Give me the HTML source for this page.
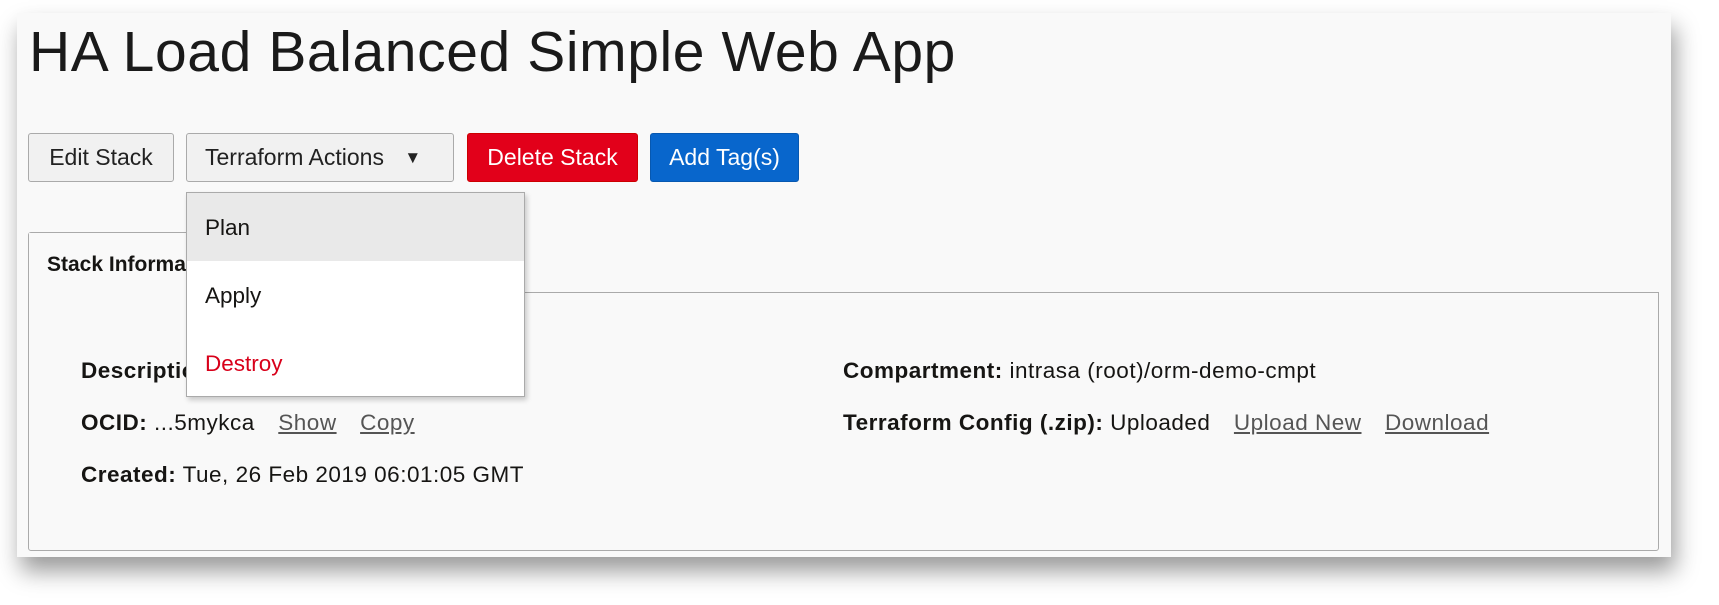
<!DOCTYPE html>
<html><head><style>
body{margin:0;width:1719px;height:605px;background:#fff;font-family:"Liberation Sans",sans-serif;position:relative;overflow:hidden;color:#161513}
.panel{position:absolute;left:17px;top:13px;width:1654px;height:544px;background:#f9f9f9;box-shadow:4px 14px 22px rgba(0,0,0,0.4)}
.a{position:absolute;white-space:nowrap}
h1{position:absolute;left:29px;top:19px;margin:0;font-weight:normal;font-size:57px;letter-spacing:0.6px;color:#1a1a1a;white-space:nowrap}
.btn{position:absolute;top:133px;height:49px;box-sizing:border-box;border-radius:3px;font-size:23px;line-height:47px;text-align:center;white-space:nowrap}
.g{background:#f1f1f1;border:1px solid #aaa;color:#222}
.box{position:absolute;border:1px solid #aaa;background:#f9f9f9}
.lbl{font-weight:bold}
.lnk{color:#555;text-decoration:underline;margin-left:10px}
.r{position:absolute;font-size:22.5px;letter-spacing:0.5px;white-space:nowrap}
</style></head><body>
<div class="panel"></div>
<h1>HA Load Balanced Simple Web App</h1>
<div class="btn g" style="left:28px;width:146px">Edit Stack</div>
<div class="btn g" style="left:186px;width:268px;text-align:left;padding-left:18px">Terraform Actions <span style="font-size:17px;margin-left:14px;position:relative;top:-2px">&#9660;</span></div>
<div class="btn" style="left:467px;width:171px;background:#e2001a;color:#fff;border:1px solid #c00">Delete Stack</div>
<div class="btn" style="left:650px;width:149px;background:#0866cc;color:#fff;border:1px solid #0758b0">Add Tag(s)</div>

<div class="box" style="left:28px;top:232px;width:320px;height:70px;border-bottom:none;border-radius:3px 3px 0 0"></div>
<div class="box" style="left:28px;top:292px;width:1629px;height:257px;border-top:1px solid #aaa;border-radius:0 0 3px 3px"></div>
<div class="box" style="left:29px;top:233px;width:318px;height:62px;border:none"></div>
<div class="a lbl" style="left:47px;top:253px;font-size:21px">Stack Information</div>

<div class="r" style="left:81px;top:358px"><span class="lbl">Description:</span></div>
<div class="r" style="left:81px;top:410px"><span class="lbl">OCID:</span> ...5mykca &nbsp;<span class="lnk">Show</span> &nbsp;<span class="lnk">Copy</span></div>
<div class="r" style="left:81px;top:462px"><span class="lbl">Created:</span> Tue, 26 Feb 2019 06:01:05 GMT</div>
<div class="r" style="left:843px;top:358px"><span class="lbl">Compartment:</span> intrasa (root)/orm-demo-cmpt</div>
<div class="r" style="left:843px;top:410px"><span class="lbl">Terraform Config (.zip):</span> Uploaded &nbsp;<span class="lnk">Upload New</span> &nbsp;<span class="lnk">Download</span></div>

<div style="position:absolute;left:186px;top:192px;width:339px;height:205px;background:#fff;border:1px solid #aaa;box-sizing:border-box;box-shadow:2px 3px 5px rgba(0,0,0,0.2)">
<div style="height:68px;background:#e9e9e9;font-size:22.5px;line-height:70px;padding-left:18px">Plan</div>
<div style="height:68px;font-size:22.5px;line-height:70px;padding-left:18px">Apply</div>
<div style="height:68px;font-size:22.5px;line-height:70px;padding-left:18px;color:#d8001a">Destroy</div>
</div>
</body></html>
